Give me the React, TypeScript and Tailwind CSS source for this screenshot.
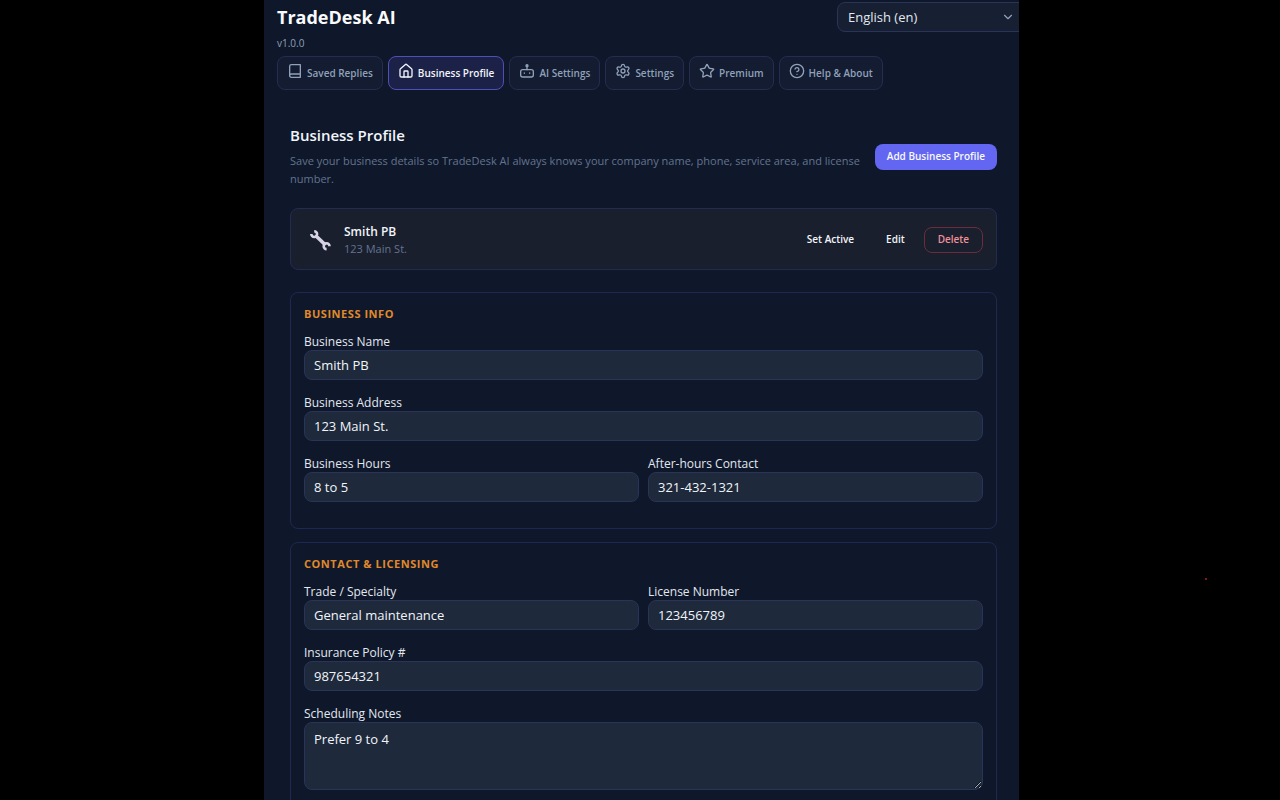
import { ReactNode, useState } from 'react';
import { ChevronDown, CircleHelp, House, Settings, Star } from 'lucide-react';

interface FieldProps {
  id: string;
  label: string;
  value: string;
}

interface SectionProps {
  title: string;
  children: ReactNode;
}

const iconClass = 'w-4 h-4 mb-1 shrink-0';

function BookIcon() {
  return (
    <svg className={iconClass} viewBox="0 0 24 24" fill="none" stroke="currentColor" strokeWidth="2" strokeLinecap="round" strokeLinejoin="round">
      <path d="M4 19V5a2.500 2.500 0 0 1 2.500-2.500H20v19H6.500A2.500 2.500 0 0 1 4 19a2.500 2.500 0 0 1 2.500-2.500H20" />
    </svg>
  );
}

function RobotIcon() {
  return (
    <svg className={iconClass} viewBox="0 0 24 24" fill="none" stroke="currentColor" strokeWidth="2" strokeLinecap="round" strokeLinejoin="round">
      <rect x="2.5" y="10" width="19" height="11" rx="3" />
      <circle cx="12" cy="4" r="1.5" fill="currentColor" />
      <path d="M12 5v5M8 15v.5M16 15v.5" />
    </svg>
  );
}

function WrenchIcon() {
  return (
    <svg className="w-[22px] h-[22px] shrink-0" viewBox="0 0 22 22" fill="none" stroke="#d9d2e6">
      <path d="M6.500 6.500l10 9.500" strokeWidth="3.600" />
      <path d="M5.200 2.200A2.900 2.900 0 1 1 2.300 5.100" strokeWidth="2.600" />
      <path d="M20.500 17.200A2.900 2.900 0 1 0 17.600 20.100" strokeWidth="2.600" />
    </svg>
  );
}

const tabs = [
  { name: 'Saved Replies', icon: <BookIcon /> },
  { name: 'Business Profile', icon: <House className={iconClass} /> },
  { name: 'AI Settings', icon: <RobotIcon /> },
  { name: 'Settings', icon: <Settings className={iconClass} /> },
  { name: 'Premium', icon: <Star className={iconClass} /> },
  { name: 'Help & About', icon: <CircleHelp className={iconClass} /> },
];

function Field({ id, label, value }: FieldProps) {
  return (
    <div className="mb-[13px]">
      <label htmlFor={id} className="block pt-0.5 text-xs leading-4 text-slate-200">
        {label}
      </label>
      <input
        id={id}
        type="text"
        defaultValue={value}
        className="block w-full h-[30px] px-[9px] rounded-lg border border-[#2a3358] bg-[#1e293b] text-[13px] text-slate-100 outline-none"
      />
    </div>
  );
}

function Section({ title, children }: SectionProps) {
  return (
    <section className="mb-[13px] p-[13px] rounded-lg border border-[#1f2850]">
      <h3 className="mb-2.5 text-[11px] leading-4 font-bold tracking-wider uppercase text-[#e0892a]">{title}</h3>
      {children}
    </section>
  );
}

export default function App() {
  const [activeTab, setActiveTab] = useState('Business Profile');

  return (
    <div className="relative h-screen overflow-hidden bg-black pl-[3px] font-['Open_Sans','Noto_Sans',sans-serif]">
      <span aria-hidden="true" className="absolute right-[73px] top-[578px] w-0.5 h-0.5 bg-red-900" />
      <div className="mx-auto max-w-[755px] min-h-full overflow-hidden bg-[#0f172a]">
        {/* Header */}
        <header className="pl-[13px]">
          <div className="flex items-start justify-between pt-0.5">
            <div>
              <h1 className="text-lg leading-[30px] font-bold text-slate-50">TradeDesk AI</h1>
              <p className="pt-1 text-[10px] leading-[14px] text-slate-400">v1.0.0</p>
            </div>
            <div className="relative -mr-2 w-[190px] shrink-0">
              <select
                aria-label="Language"
                className="w-full h-[30px] pt-0.5 pl-2.5 appearance-none rounded-lg border border-[#2a3358] bg-[#162032] text-[13px] text-slate-200 outline-none"
              >
                <option>English (en)</option>
              </select>
              <ChevronDown className="absolute right-3 top-2 w-3.5 h-3.5 text-slate-400 pointer-events-none" />
            </div>
          </div>

          {/* Tabs */}
          <nav className="mt-1.5 flex gap-[5px]">
            {tabs.map((tab) => (
              <button
                key={tab.name}
                type="button"
                onClick={() => setActiveTab(tab.name)}
                className={`flex items-center gap-1 h-[34px] px-[9px] rounded-lg border text-[10px] font-semibold whitespace-nowrap ${
                  activeTab === tab.name
                    ? 'bg-[#1c2148] border-[#4f4fb8] text-slate-100'
                    : 'bg-[#131c30] border-[#252c50] text-slate-400'
                }`}
              >
                {tab.icon}
                {tab.name}
              </button>
            ))}
          </nav>
        </header>

        <main className="pt-[35px] pl-[26px] pr-[22px]">
          <div className="flex items-center justify-between">
            <div>
              <h2 className="text-[15px] leading-5 font-semibold text-slate-100">Business Profile</h2>
              <p className="mt-[7px] text-[11px] leading-[18px] text-slate-500">
                Save your business details so TradeDesk AI always knows your company name, phone, service area, and license number.
              </p>
            </div>
            <button type="button" className="h-[26px] px-3 shrink-0 rounded-lg bg-[#6366f1] text-[10px] font-semibold text-slate-50">
              Add Business Profile
            </button>
          </div>

          {/* Saved profile */}
          <div className="mt-5 mb-[22px] flex items-center h-[62px] pt-px pl-[18px] pr-[13px] rounded-lg border border-[#232b50] bg-[#1a1f2e]">
            <WrenchIcon />
            <div className="ml-[13px] flex-1">
              <p className="text-xs leading-[18px] font-semibold text-slate-100">Smith PB</p>
              <p className="text-[11px] leading-4 text-slate-500">123 Main St.</p>
            </div>
            <div className="flex items-center gap-1.5 text-[10px] font-semibold text-slate-100">
              <button type="button" className="h-[26px] px-[13px]">Set Active</button>
              <button type="button" className="h-[26px] px-[13px]">Edit</button>
              <button type="button" className="h-[26px] px-[13px] rounded-lg border border-[#6b2c3c] text-[#f09098]">Delete</button>
            </div>
          </div>

          <Section title="Business Info">
            <Field id="name" label="Business Name" value="Smith PB" />
            <Field id="address" label="Business Address" value="123 Main St." />
            <div className="grid grid-cols-2 gap-x-[9px]">
              <Field id="hours" label="Business Hours" value="8 to 5" />
              <Field id="after-hours" label="After-hours Contact" value="321-432-1321" />
            </div>
          </Section>

          <Section title="Contact & Licensing">
            <div className="grid grid-cols-2 gap-x-[9px]">
              <Field id="trade" label="Trade / Specialty" value="General maintenance" />
              <Field id="license" label="License Number" value="123456789" />
            </div>
            <Field id="insurance" label="Insurance Policy #" value="987654321" />
            <label htmlFor="notes" className="block pt-0.5 text-xs leading-4 text-slate-200">
              Scheduling Notes
            </label>
            <textarea
              id="notes"
              defaultValue="Prefer 9 to 4"
              className="block w-full h-[68px] mb-[13px] px-[9px] py-[7px] resize-y rounded-lg border border-[#2a3358] bg-[#1e293b] text-[13px] leading-[18px] text-slate-100 outline-none"
            />
          </Section>
        </main>
      </div>
    </div>
  );
}
